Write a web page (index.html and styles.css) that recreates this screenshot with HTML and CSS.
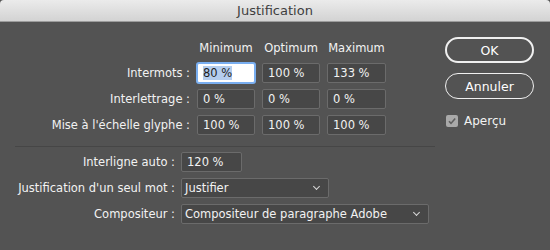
FILE: index.html
```html
<!doctype html>
<html>
<head>
    <title>Justification</title>
    <link rel="stylesheet" href="styles.css">
</head>
<body>
    <div class="window">
        <div class="titlebar">Justification</div>
        <div class="dialog">
            <div class="main">
                <div class="spacing-grid">
                    <div></div>
                    <div class="col-head">Minimum</div>
                    <div class="col-head">Optimum</div>
                    <div class="col-head">Maximum</div>

                    <div class="label">Intermots :</div>
                    <div class="field focused"><span class="selected">80 %</span></div>
                    <div class="field">100 %</div>
                    <div class="field">133 %</div>

                    <div class="label">Interlettrage :</div>
                    <div class="field">0 %</div>
                    <div class="field">0 %</div>
                    <div class="field">0 %</div>

                    <div class="label">Mise à l'échelle glyphe :</div>
                    <div class="field">100 %</div>
                    <div class="field">100 %</div>
                    <div class="field">100 %</div>
                </div>

                <div class="separator"></div>

                <div class="options-grid">
                    <div class="label">Interligne auto :</div>
                    <div><div class="field leading">120 %</div></div>

                    <div class="label">Justification d'un seul mot :</div>
                    <div><div class="field select single-word">Justifier <span class="chevron"></span></div></div>

                    <div class="label">Compositeur :</div>
                    <div><div class="field select composer">Compositeur de paragraphe Adobe <span class="chevron"></span></div></div>
                </div>
            </div>
            <div class="side">
                <button class="btn default">OK</button>
                <button class="btn">Annuler</button>
                <label class="preview">
                    <span class="checkbox">
                        <svg width="12" height="12" viewBox="0 0 12 12"><path d="M3 6.2 L5 8.4 L9.2 3.4" fill="none" stroke="#5e5e5e" stroke-width="1.6"/></svg>
                    </span>
                    Aperçu
                </label>
            </div>
        </div>
    </div>
</body>
</html>
```
FILE: styles.css
```css
body {
    margin: 0;
    padding: 0;
    background-color: #535353;
    font-family: "DejaVu Sans", sans-serif;
    font-size: 11.5px;
    color: #f2f2f2;
}
.window {
    width: 550px;
    height: 250px;
    overflow: hidden;
}
.titlebar {
    height: 21px;
    line-height: 22px;
    text-align: center;
    font-size: 13px;
    color: #3e3e3e;
    background: linear-gradient(#ebebeb, #d3d3d3);
    border-bottom: 1px solid #9c9c9c;
    border-radius: 4px 4px 0 0;
}
.dialog {
    display: flex;
}
.main {
    width: 435px;
    padding-top: 17px;
}
.spacing-grid {
    display: grid;
    grid-template-columns: 190px 58px 58px 59px;
    grid-template-rows: 18px 20px 20px 20px;
    column-gap: 7px;
    row-gap: 6px;
}
.col-head {
    text-align: center;
    line-height: 18px;
}
.label {
    text-align: right;
    line-height: 20px;
    white-space: nowrap;
}
.field {
    box-sizing: border-box;
    height: 20px;
    line-height: 18px;
    padding: 0 5px;
    background-color: #474747;
    border: 1px solid #6b6b6b;
    border-radius: 2px;
    white-space: nowrap;
}
.field.focused {
    background-color: #ffffff;
    color: #1e1e1e;
    border-color: #79aef0;
    box-shadow: 0 0 0 1px #79aef0;
}
.selected {
    background-color: #b4cdee;
}
.separator {
    margin: 11px 0 5px 15px;
    height: 1px;
    background-color: #464646;
}
.options-grid {
    display: grid;
    grid-template-columns: 175px 1fr;
    column-gap: 6px;
    row-gap: 6px;
}
.leading {
    width: 61px;
}
.select {
    position: relative;
    padding-left: 3px;
}
.single-word {
    width: 148px;
}
.composer {
    width: 248px;
}
.chevron {
    position: absolute;
    right: 9px;
    top: 5px;
    width: 4px;
    height: 4px;
    border-right: 1px solid #d8d8d8;
    border-bottom: 1px solid #d8d8d8;
    transform: rotate(45deg);
}
.side {
    width: 89px;
    margin-left: 10px;
    padding-top: 15px;
    display: flex;
    flex-direction: column;
}
.btn {
    box-sizing: border-box;
    height: 26px;
    margin-bottom: 10px;
    background-color: #535353;
    color: #ffffff;
    font-family: "DejaVu Sans", sans-serif;
    font-size: 12.5px;
    border: 1px solid #f0f0f0;
    border-radius: 13px;
}
.btn.default {
    border-width: 2px;
}
.preview {
    display: flex;
    align-items: center;
    gap: 6px;
    margin-top: 5px;
    margin-left: 1px;
    font-size: 12px;
}
.checkbox {
    display: flex;
    width: 12px;
    height: 12px;
    background-color: #a9a9a9;
    border-radius: 2px;
}
```
